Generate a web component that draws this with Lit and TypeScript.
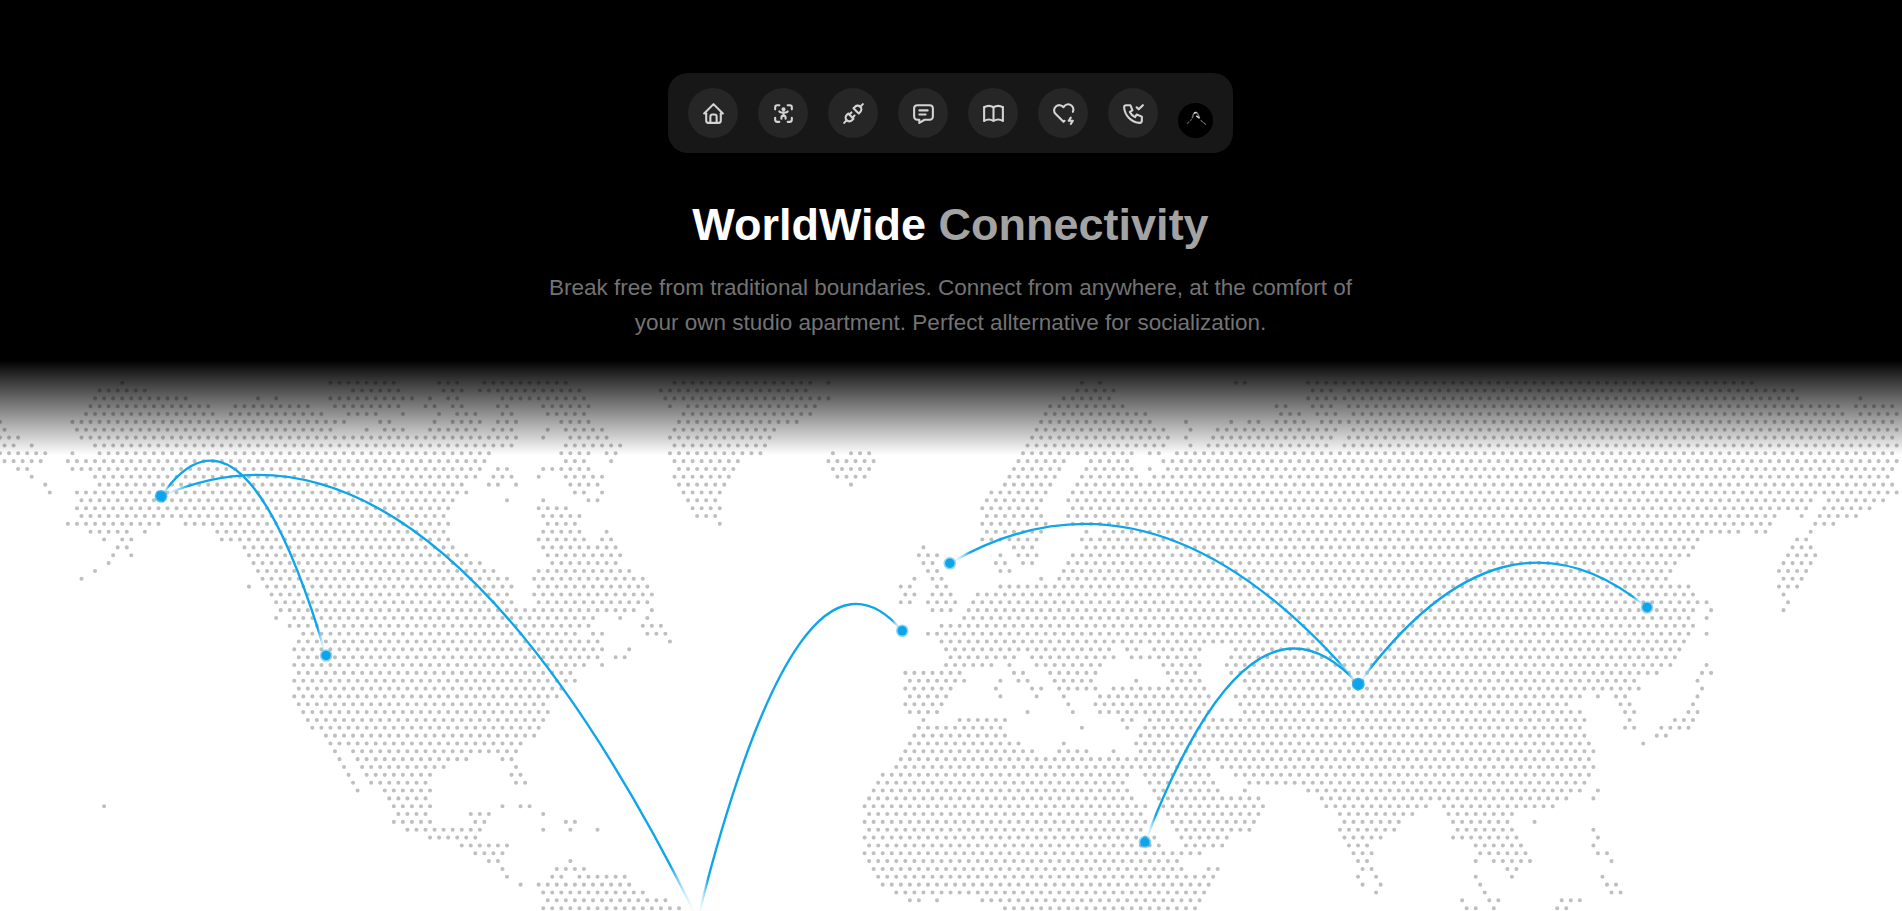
import { LitElement, html, svg, css } from "lit";
import { customElement, property } from "lit/decorators.js";

/* Land runs for each dot row. Values are in thirds of a pixel on a 5706-unit wide map. */
const LAND = `366 991-1181 1317-1371 1452-1697 2023-2430 2485 3245 3300 3706-3733 3924-5255
299-435 1059-1195 1330-1385 1439-1738 1982-2417 3232-3340 3938-3992 4046-5377
285-557 774 828 991-1236 1290 1344-1371 1507-1752 1996-2485 3191-3326 3924-5391 5581
272-625 706-923 1005-1208 1276-1303 1358-1385 1493-1521 1629-1765 2009 2064-2444 3150-3367 3829-3856 3938-3992 4046-5513 5567-5676
258-638 692-964 1045-1127 1208 1317 1371-1425 1507-1534 1643-1752 2050-2430 3136-3435 3843-3897 3951-4006 4060-5527 5581-5690
0 217-1032 1140-1168 1303 1358-1439 1493-1548 1683-1765 2036-2390 3123-3449 3557 3693 3747-3774 3829-3910 3965-5676
14 231-991 1100 1154-1208 1290-1425 1480-1534 1643 1697-1806 2023-2322 3109-3490 3571 3652-4006 4060-5690
0-54 244-1548 1629 1710-1820 2009-2308 3096-3503 3557 3639-3992 4046-5676
14-41 95 285-1534 1697-1860 2023-2295 3082-3490 3571 3625-3978 4033-5690
0-136 217 299-1466 1683-1765 1820-1847 2009-2281 2498 2552-2607 3069-3395 3449-3476 3530-5676
14-122 204-1452 1697-1752 1833 2023-2213 2485-2620 3055-3191 3272-3381 3490-5690
54-81 217-1439 1493-1521 1629-1765 2036-2200 2498-2607 3042-3177 3259-3395 3449 3503-5676
95 285-1425 1480-1534 1616 1697-1806 2023-2186 2512-2593 3028-3164 3245-3408 3462-5663
136 299-1385 1466-1493 1548 1710-1792 2036-2173 2552 3015-3150 3232-5676
149 231-1398 1724-1752 1806 2050-2159 2974-3137 3218-5690
244-1358 1521 1629 1765-1792 2064-2145 2960-3112 3205-5438 5486-5649
231-1344 1616-1697 2077-2159 2946-3109 3218-5418 5472-5608
244-1330 1629-1738 2091-2145 2960-3123 3205-5323 5404 5458-5567
204-476 557-1344 1643-1724 2159 2946-3137 3218-5310 5445-5499
272-380 435 652-1330 1629-1738 1820 2960-3123 3259 3313-5215 5269-5296 5431
312 366-394 665-1344 1616-1752 1806-1833 2946-3109 3245-5092 5391-5418
353-380 733-1358 1629-1847 2769 3042-3096 3259-5078 5377-5431
339 394 747-1398 1643-1860 2756-2810 3001 3055-3109 3218-5065 5364-5445
326 760-1439 1656-1847 2769-2797 2987-3014 3069-3096 3205-5024 5350-5431
285 774-1480 1616-1887 2783-2810 3001-3028 3191-5011 5337-5418
244 787-1521 1602-1928 2742 2797-2824 3123 3177-4997 5350-5404
747 801-1534 1616-1942 2702-2729 2810-2837 3001-5065 5337-5391
814-1521 1602-1955 2715-2742 2797-2851 2933-5078 5350
828-1534 1616-1941 2702-2729 2783-2865 2919-5119 5364
842-1901 1955 2797-2851 2906-5078 5133 5350
828 882-1779 1860 1941 2892-5065 5119
869-1765 1928-1982 2824-5078
909-1724 1779-1806 1942-1996 2783-5065 5119
896-1792 2009 2824-5051
882-1806 1887 2837-3326 3381-3408 3462-3598 3706-5038
896-1792 1846-1874 2851-3042 3096-3340 3394-3584 3693-5024
882-1752 1806 2837-2974 3028 3109-3300 3489-3598 3679-5011 5119
896-1710 2715-2878 3042-3069 3150-3286 3503-3584 3693-4970 5105-5133
882-1724 2729-2892 3001 3055-3082 3164-3272 3408 3517-3598 3734-4902 5092
896-1683 2715-2851 2987 3096-3123 3177-3286 3340-3612 3747-4915 5105
882-1670 2729-2838 3001 3109 3191 3299-3625 3706-4739 4793 4847-4875 5092
896-1629 2715-2824 3204 3286-3612 3720-4698 4861-4888 5078
909-1643 2729-2810 3082 3218 3299-3625 3734-4739 4875-4902 5065-5092
923-1629 2769 2878-3014 3367-3395 3449-4753 4888 5024-5078
937-1616 2756-3001 3245 3381 3435-4739 4875-4902 4983-5065
977-1602 2742-3014 3422-4753 4970-4997
991-1561 2729-3055 3191 3408-4766 4929
1005 1059-1548 2715-3096 3177-3259 3340 3422-4780
1018 1072-1398 1507-1534 2702-4766
1032 1086-1330 1548 2688-3612 3666-4780
1045 1100-1290 1534-1561 2647-3381 3435-3625 3706-4766
1059 1113-1276 1548-1575 2634-3367 3449-3639 3747-4753
1072 1154-1290 2620-3381 3462-3652 3734 3924-4739 4793
1167-1276 2607-3394 3476-3774 3965-4698 4780
312 1181-1290 1507 1561-1589 2593-3435 3489-3788 3978-4277 4331-4661
1195-1276 1412-1466 1629 2607-3422 3503-3774 4019-4237 4345-4535
1181-1290 1425-1452 1697-1724 2593-3435 3517-3761 4033-4196 4358-4522 4603
1222-1439 1629 1710 1792 2607-3422 3530-3747 4019-4182 4372-4535 4780
1290-1425 2593-3462 3544-3679 4033-4142 4358-4549 4793
1385-1521 2607-3476 3557-3666 4046-4101 4426-4562 4780
1425-1507 2593-3598 4060-4114 4440-4576 4793-4820
1466-1493 1710 2607-3530 4073-4101 4426 4481-4590 4834
1507 1670-1752 2620-3544 3625-3652 4087-4114 4522-4549
1521 1656-1683 1738-1874 2634-3639 4073 4128 4426 4535 4807
1561 1616-1887 2647-3625 4087 4142 4440 4820-4847
1629-1928 2688-3612 4128 4453 4834-4861
1643-1996 2729-2756 2810 2946-3598 4386 4467-4494 4684-4739
1629-2037 3014-3584 4399-4426 4481 4671-4698`;

const PITCH = 9.0534;
const ROW_STEP = 7.843;
const FIRST_ROW = 22.7;

const dotPath = LAND.split("\n")
  .map((line, row) => {
    const shift = row % 2 === 0 ? 0.5 : 0;
    const y = (FIRST_ROW + row * ROW_STEP).toFixed(2);
    return line
      .trim()
      .split(" ")
      .map((run) => {
        const [a, b] = run.split("-").map(Number);
        const first = Math.round(a / 3 / PITCH - shift);
        const last = Math.round((b ?? a) / 3 / PITCH - shift);
        let out = "";
        for (let k = first; k <= last; k++) {
          out += `M${((k + shift) * PITCH).toFixed(2)} ${y}h0`;
        }
        return out;
      })
      .join("");
  })
  .join("");

type Place = [lat: number, lng: number];

const ALASKA: Place = [64.2008, -149.4937];
const LOS_ANGELES: Place = [34.0522, -118.2437];
const BRASILIA: Place = [-15.7975, -47.8919];
const LISBON: Place = [38.7223, -9.1393];
const LONDON: Place = [51.5074, -0.1278];
const DELHI: Place = [28.6139, 77.209];
const VLADIVOSTOK: Place = [43.1332, 131.9113];
const NAIROBI: Place = [-1.2921, 36.8219];

const ROUTES: [Place, Place][] = [
  [ALASKA, LOS_ANGELES],
  [ALASKA, BRASILIA],
  [BRASILIA, LISBON],
  [LONDON, DELHI],
  [DELHI, VLADIVOSTOK],
  [DELHI, NAIROBI],
];

const project = ([lat, lng]: Place) => ({
  x: (lng + 180) * (800 / 360),
  y: (90 - lat) * (400 / 180),
});

const arc = (from: Place, to: Place) => {
  const a = project(from);
  const b = project(to);
  return `M${a.x} ${a.y}Q${(a.x + b.x) / 2} ${Math.min(a.y, b.y) - 50} ${b.x} ${b.y}`;
};

@customElement("world-map")
export class WorldMap extends LitElement {
  static styles = css`
    :host {
      display: grid;
      width: 100%;
      height: 951px;
    }
    svg {
      grid-area: 1 / 1;
      display: block;
      width: 100%;
      height: 100%;
    }
    .land {
      background: #fff;
      -webkit-mask-image: linear-gradient(to bottom, transparent, #fff 10%, #fff 90%, transparent);
      mask-image: linear-gradient(to bottom, transparent, #fff 10%, #fff 90%, transparent);
    }
    .routes {
      z-index: 1;
      width: calc(100% - 1px);
      height: calc(100% - 0.5px);
    }
    .dots {
      fill: none;
      stroke: #000;
      stroke-opacity: 0.25;
      stroke-width: 4.1;
      stroke-linecap: round;
    }
    .route {
      fill: none;
      stroke: url(#fade);
      stroke-width: 1;
    }
    .place {
      fill: #0ea5e9;
    }
    .pulse {
      fill: #0ea5e9;
      opacity: 0.45;
    }
  `;

  render() {
    return html`
      <svg class="land" viewBox="0 0 1902 951"><path class="dots" d=${dotPath}></path></svg>
      <svg class="routes" viewBox="0 0 800 400">
        <defs>
          <linearGradient id="fade" x1="0%" y1="0%" x2="100%" y2="0%">
            <stop offset="0%" stop-color="white" stop-opacity="0"></stop>
            <stop offset="5%" stop-color="#0ea5e9"></stop>
            <stop offset="95%" stop-color="#0ea5e9"></stop>
            <stop offset="100%" stop-color="white" stop-opacity="0"></stop>
          </linearGradient>
        </defs>
        ${ROUTES.map(([from, to]) => svg`<path class="route" d=${arc(from, to)}></path>`)}
        ${ROUTES.flat().map((place) => {
          const { x, y } = project(place);
          return svg`<circle class="place" cx=${x} cy=${y} r="2"></circle>
            <circle class="pulse" cx=${x} cy=${y} r="2.65"></circle>`;
        })}
      </svg>
    `;
  }
}

const ICONS: string[][] = [
  [
    "M5 12l-2 0l9 -9l9 9l-2 0",
    "M5 12v7a2 2 0 0 0 2 2h10a2 2 0 0 0 2 -2v-7",
    "M9 21v-6a2 2 0 0 1 2 -2h2a2 2 0 0 1 2 2v6",
  ],
  [
    "M4 8v-2a2 2 0 0 1 2 -2h2",
    "M4 16v2a2 2 0 0 0 2 2h2",
    "M16 4h2a2 2 0 0 1 2 2v2",
    "M16 20h2a2 2 0 0 0 2 -2v-2",
    "M12 8m-1 0a1 1 0 1 0 2 0a1 1 0 1 0 -2 0",
    "M10 17v-1a2 2 0 1 1 4 0v1",
    "M8 10c.666 .666 1.334 1 2 1h4c.666 0 1.334 -.334 2 -1",
    "M12 11v3",
  ],
  [
    "M7 12l5 5l-1.5 1.5a3.536 3.536 0 1 1 -5 -5l1.5 -1.5z",
    "M17 12l-5 -5l1.5 -1.5a3.536 3.536 0 1 1 5 5l-1.5 1.5z",
    "M3 21l2.5 -2.5",
    "M18.5 5.5l2.5 -2.5",
    "M10 11l-2 2",
    "M13 14l-2 2",
  ],
  [
    "M8 9h8",
    "M8 13h6",
    "M18 4a3 3 0 0 1 3 3v8a3 3 0 0 1 -3 3h-5l-5 3v-3h-2a3 3 0 0 1 -3 -3v-8a3 3 0 0 1 3 -3h12z",
  ],
  [
    "M3 19a9 9 0 0 1 9 0a9 9 0 0 1 9 0",
    "M3 6a9 9 0 0 1 9 0a9 9 0 0 1 9 0",
    "M3 6l0 13",
    "M12 6l0 13",
    "M21 6l0 13",
  ],
  [
    "M13 19l-1 1l-7.5 -7.428a5 5 0 1 1 7.5 -6.566a5 5 0 1 1 8.993 4.385",
    "M19 16l-2 3h4l-2 3",
  ],
  [
    "M5 4h4l2 5l-2.5 1.5a11 11 0 0 0 5 5l1.5 -2.5l5 2v4a2 2 0 0 1 -2 2a16 16 0 0 1 -15 -15a2 2 0 0 1 2 -2",
    "M15 6l2 2l4 -4",
  ],
];

@customElement("dock-icon")
export class DockIcon extends LitElement {
  static styles = css`
    :host {
      display: grid;
      place-items: center;
      width: 50px;
      height: 50px;
      border-radius: 50%;
      background: #262626;
    }
    svg {
      display: block;
      width: 25px;
      height: 25px;
      fill: none;
      stroke: #d4d4d4;
      stroke-width: 2;
      stroke-linecap: round;
      stroke-linejoin: round;
    }
  `;

  @property({ attribute: false }) paths: string[] = [];

  render() {
    return html`<svg viewBox="0 0 24 24">${this.paths.map((d) => svg`<path d=${d}></path>`)}</svg>`;
  }
}

@customElement("app-root")
export class AppRoot extends LitElement {
  static styles = css`
    :host {
      display: block;
      height: 100vh;
      overflow: hidden;
      background: #000;
      font-family: "Liberation Sans", Arial, sans-serif;
    }
    .intro {
      display: flex;
      flex-direction: column;
      align-items: center;
      padding: 73px 1px 20px 0;
    }
    .dock {
      box-sizing: border-box;
      display: flex;
      align-items: flex-end;
      gap: 20px;
      height: 80px;
      padding: 0 20px 15px;
      border-radius: 20px;
      background: #171717;
    }
    .avatar {
      display: block;
      width: 35px;
      height: 35px;
      border-radius: 50%;
      background: #000;
    }
    h1 {
      margin: 47px 0 0;
      font-size: 45px;
      line-height: 50px;
      font-weight: 700;
      color: #fff;
    }
    .muted {
      color: #a3a3a3;
    }
    p {
      width: 840px;
      margin: 20px 0 0;
      font-size: 22.5px;
      line-height: 35px;
      text-align: center;
      color: #737373;
    }
  `;

  render() {
    return html`
      <header class="intro">
        <nav class="dock">
          ${ICONS.map((paths) => html`<dock-icon .paths=${paths}></dock-icon>`)}
          <svg class="avatar" viewBox="0 0 35 35" fill="none" stroke-linecap="round">
            <path d="M14.4 14.6L15.6 10.8Q17.8 7.6 19.8 10.8L21.4 14.6" stroke="#6f6f6f" stroke-width="1.6"></path>
            <path d="M16.6 10l1.6 -.4M18.6 13.2l2.4 1.6" stroke="#dcdcdc" stroke-width="1.4"></path>
            <path d="M13.6 16.4l-1.2 1.2M11 19l-1.6 1.4" stroke="#5c5c5c" stroke-width="1.1"></path>
            <path d="M23 17.4l1.4 1.4M25.6 19.6l2 1.8" stroke="#6c6c6c" stroke-width="1.1"></path>
          </svg>
        </nav>
        <h1>WorldWide <span class="muted">Connectivity</span></h1>
        <p>
          Break free from traditional boundaries. Connect from anywhere, at the comfort of<br />
          your own studio apartment. Perfect allternative for socialization.
        </p>
      </header>
      <world-map></world-map>
    `;
  }
}
